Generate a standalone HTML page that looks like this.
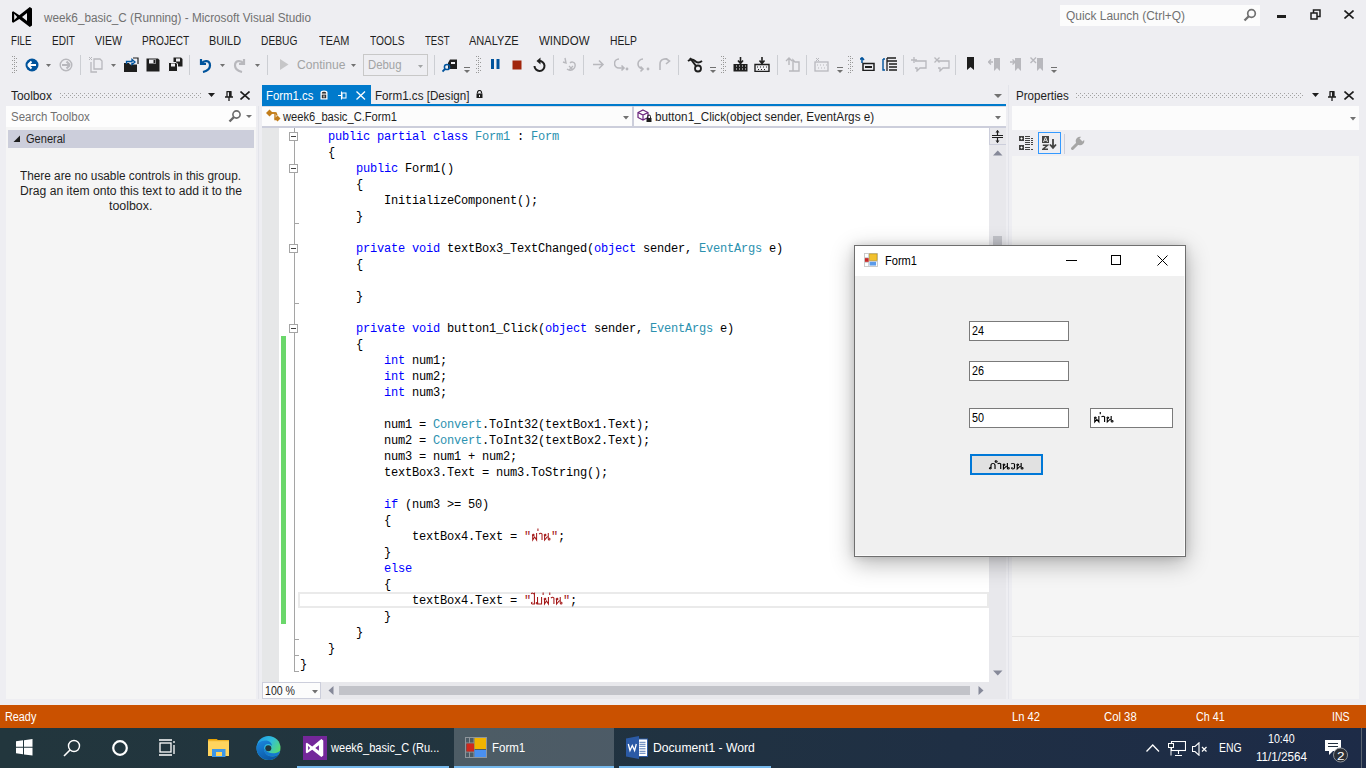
<!DOCTYPE html><html><head><meta charset="utf-8"><style>
html,body{margin:0;padding:0;width:1366px;height:768px;overflow:hidden;background:#eeeef2;position:relative}
body>div,body>svg{position:absolute}
div{position:absolute;box-sizing:border-box}
.t{line-height:0;white-space:pre}
.code{font-family:'Liberation Mono',monospace;font-size:12px;letter-spacing:-0.2px;color:#000}
</style></head><body>
<svg style="position:absolute;left:11px;top:7px;" width="22" height="21" viewBox="0 0 22 21"><path d="M18.8 0 L21 1.6 L21 18.4 L18.8 20 L8.3 12 L2.2 15.8 L1 15 L1 5 L2.2 4.2 L8.3 8.3 Z M3.2 6.8 L6.2 10 L3.2 13 Z M16 6 L16 14 L11 10 Z" fill="#000" fill-rule="evenodd"/></svg>
<div class="t" style="left:44.02px;top:17.84px;font-family:'Liberation Sans',sans-serif;font-size:12px;color:#717171;transform:scaleX(0.9771);transform-origin:0 0;">week6_basic_C (Running) - Microsoft Visual Studio</div>
<div style="left:1060px;top:5px;width:200px;height:21px;background:#fcfcfc;"></div>
<div class="t" style="left:1066.00px;top:15.84px;font-family:'Liberation Sans',sans-serif;font-size:12px;color:#717171;transform:scaleX(0.9941);transform-origin:0 0;">Quick Launch (Ctrl+Q)</div>
<svg style="position:absolute;left:1243px;top:8px;" width="14" height="14" viewBox="0 0 14 14"><circle cx="8.5" cy="5.5" r="3.8" stroke="#717171" stroke-width="1.7" fill="none"/><path d="M6 8 L1.5 12.5" stroke="#717171" stroke-width="2.3"/></svg>
<div style="left:1277px;top:15px;width:9px;height:3px;background:#1e1e1e;"></div>
<svg style="position:absolute;left:1310px;top:9px;" width="11" height="11" viewBox="0 0 11 11"><rect x="1" y="4" width="6" height="6" fill="none" stroke="#1e1e1e" stroke-width="1.5"/><path d="M3.5 4 V1 H10 V7.5 H7" fill="none" stroke="#1e1e1e" stroke-width="1.5"/></svg>
<svg style="position:absolute;left:1344px;top:10px;" width="10" height="9" viewBox="0 0 10 9"><path d="M0.5 0.5 L9.5 8.5 M9.5 0.5 L0.5 8.5" stroke="#1e1e1e" stroke-width="1.6"/></svg>
<div class="t" style="left:11.20px;top:40.84px;font-family:'Liberation Sans',sans-serif;font-size:12px;color:#1e1e1e;transform:scaleX(0.8049);transform-origin:0 0;">FILE</div>
<div class="t" style="left:52.30px;top:40.84px;font-family:'Liberation Sans',sans-serif;font-size:12px;color:#1e1e1e;transform:scaleX(0.8377);transform-origin:0 0;">EDIT</div>
<div class="t" style="left:95.00px;top:40.84px;font-family:'Liberation Sans',sans-serif;font-size:12px;color:#1e1e1e;transform:scaleX(0.8803);transform-origin:0 0;">VIEW</div>
<div class="t" style="left:142.40px;top:40.84px;font-family:'Liberation Sans',sans-serif;font-size:12px;color:#1e1e1e;transform:scaleX(0.8428);transform-origin:0 0;">PROJECT</div>
<div class="t" style="left:209.00px;top:40.84px;font-family:'Liberation Sans',sans-serif;font-size:12px;color:#1e1e1e;transform:scaleX(0.9055);transform-origin:0 0;">BUILD</div>
<div class="t" style="left:261.00px;top:40.84px;font-family:'Liberation Sans',sans-serif;font-size:12px;color:#1e1e1e;transform:scaleX(0.8530);transform-origin:0 0;">DEBUG</div>
<div class="t" style="left:318.60px;top:40.84px;font-family:'Liberation Sans',sans-serif;font-size:12px;color:#1e1e1e;transform:scaleX(0.9119);transform-origin:0 0;">TEAM</div>
<div class="t" style="left:369.50px;top:40.84px;font-family:'Liberation Sans',sans-serif;font-size:12px;color:#1e1e1e;transform:scaleX(0.8526);transform-origin:0 0;">TOOLS</div>
<div class="t" style="left:424.50px;top:40.84px;font-family:'Liberation Sans',sans-serif;font-size:12px;color:#1e1e1e;transform:scaleX(0.7988);transform-origin:0 0;">TEST</div>
<div class="t" style="left:468.50px;top:40.84px;font-family:'Liberation Sans',sans-serif;font-size:12px;color:#1e1e1e;transform:scaleX(0.9201);transform-origin:0 0;">ANALYZE</div>
<div class="t" style="left:538.50px;top:40.84px;font-family:'Liberation Sans',sans-serif;font-size:12px;color:#1e1e1e;transform:scaleX(0.9591);transform-origin:0 0;">WINDOW</div>
<div class="t" style="left:609.50px;top:40.84px;font-family:'Liberation Sans',sans-serif;font-size:12px;color:#1e1e1e;transform:scaleX(0.8614);transform-origin:0 0;">HELP</div>
<svg style="position:absolute;left:12px;top:56px;" width="5" height="17" viewBox="0 0 5 17"><rect x="0" y="0" width="1" height="1" fill="#999"/><rect x="2" y="0" width="1" height="1" fill="#999"/><rect x="2" y="2" width="1" height="1" fill="#999"/><rect x="4" y="2" width="1" height="1" fill="#999"/><rect x="0" y="4" width="1" height="1" fill="#999"/><rect x="2" y="4" width="1" height="1" fill="#999"/><rect x="2" y="6" width="1" height="1" fill="#999"/><rect x="4" y="6" width="1" height="1" fill="#999"/><rect x="0" y="8" width="1" height="1" fill="#999"/><rect x="2" y="8" width="1" height="1" fill="#999"/><rect x="2" y="10" width="1" height="1" fill="#999"/><rect x="4" y="10" width="1" height="1" fill="#999"/><rect x="0" y="12" width="1" height="1" fill="#999"/><rect x="2" y="12" width="1" height="1" fill="#999"/><rect x="2" y="14" width="1" height="1" fill="#999"/><rect x="4" y="14" width="1" height="1" fill="#999"/><rect x="0" y="16" width="1" height="1" fill="#999"/><rect x="2" y="16" width="1" height="1" fill="#999"/></svg>
<svg style="position:absolute;left:25px;top:58px;" width="14" height="14" viewBox="0 0 14 14"><circle cx="7" cy="7" r="6.5" fill="#00539c"/><path d="M3 7 L6.5 3.5 M3 7 L6.5 10.5 M3 7 H11" stroke="#fff" stroke-width="2" fill="none"/></svg>
<svg style="position:absolute;left:46px;top:64px;" width="6" height="3" viewBox="0 0 6 3"><path d="M0 0 H5 L2.5 3 Z" fill="#717171"/></svg>
<svg style="position:absolute;left:59px;top:58px;" width="14" height="14" viewBox="0 0 14 14"><circle cx="7" cy="7" r="5.8" fill="none" stroke="#b8b8bd" stroke-width="1.4"/><path d="M11 7 L7.5 3.5 M11 7 L7.5 10.5 M11 7 H3" stroke="#b8b8bd" stroke-width="2" fill="none"/></svg>
<div style="left:80px;top:55px;width:1px;height:20px;background:#ccced3;"></div>
<svg style="position:absolute;left:89px;top:57px;" width="15" height="16" viewBox="0 0 15 16"><path d="M2 5 V15 H8 M5 2 V12 H13 V4 L11 2 Z" fill="none" stroke="#b8b8bd" stroke-width="1.3"/><path d="M0 0 L3 3 M3 0 L0 3" stroke="#b8b8bd"/></svg>
<svg style="position:absolute;left:111px;top:64px;" width="6" height="3" viewBox="0 0 6 3"><path d="M0 0 H5 L2.5 3 Z" fill="#717171"/></svg>
<svg style="position:absolute;left:123px;top:57px;" width="16" height="16" viewBox="0 0 16 16"><path d="M1 6 H6 L7 7.5 H14 V15 H1 Z" fill="#1e1e1e"/><path d="M3.5 7 V4.5 H9 V2.5 L12 5 L9 7.5 V5.8" fill="none" stroke="#00539c" stroke-width="1.3"/><path d="M10 1 H15 V7" fill="none" stroke="#1e1e1e" stroke-width="1.2"/></svg>
<svg style="position:absolute;left:146px;top:58px;" width="14" height="14" viewBox="0 0 14 14"><path d="M0.5 0.5 H12 L13.5 2 V13.5 H0.5 Z" fill="#1e1e1e"/><rect x="3" y="1.5" width="7" height="4" fill="#eeeef2"/><rect x="7.5" y="2" width="2" height="3" fill="#1e1e1e"/></svg>
<svg style="position:absolute;left:168px;top:57px;" width="15" height="15" viewBox="0 0 15 15"><path d="M5.5 0.5 H13 L14.5 2 V9.5 H5.5 Z" fill="#1e1e1e"/><rect x="8" y="1.5" width="4" height="3" fill="#eeeef2"/><path d="M0.5 5.5 H8 L9.5 7 V14.5 H0.5 Z" fill="#1e1e1e" stroke="#eeeef2" stroke-width="1"/><rect x="3" y="6.5" width="4" height="3" fill="#eeeef2"/></svg>
<div style="left:189px;top:55px;width:1px;height:20px;background:#ccced3;"></div>
<svg style="position:absolute;left:197px;top:57px;" width="15" height="16" viewBox="0 0 15 16"><path d="M4 2 V7 H9" fill="none" stroke="#00539c" stroke-width="2.2"/><path d="M4.5 6.5 C7 3 13 3 13 8.5 C13 12 10 14 6 15" fill="none" stroke="#00539c" stroke-width="2.2"/></svg>
<svg style="position:absolute;left:220px;top:64px;" width="6" height="3" viewBox="0 0 6 3"><path d="M0 0 H5 L2.5 3 Z" fill="#717171"/></svg>
<svg style="position:absolute;left:233px;top:57px;" width="15" height="16" viewBox="0 0 15 16"><path d="M11 2 V7 H6" fill="none" stroke="#b8b8bd" stroke-width="2.2"/><path d="M10.5 6.5 C8 3 2 3 2 8.5 C2 12 5 14 9 15" fill="none" stroke="#b8b8bd" stroke-width="2.2"/></svg>
<svg style="position:absolute;left:255px;top:64px;" width="6" height="3" viewBox="0 0 6 3"><path d="M0 0 H5 L2.5 3 Z" fill="#717171"/></svg>
<div style="left:267px;top:55px;width:1px;height:20px;background:#ccced3;"></div>
<svg style="position:absolute;left:280px;top:59px;" width="9" height="12" viewBox="0 0 9 12"><path d="M0 0 L8.5 5.5 L0 11 Z" fill="#c6c6c8"/></svg>
<div class="t" style="left:296.50px;top:64.84px;font-family:'Liberation Sans',sans-serif;font-size:12px;color:#a2a4a5;transform:scaleX(1.0097);transform-origin:0 0;">Continue</div>
<svg style="position:absolute;left:351px;top:64px;" width="6" height="3" viewBox="0 0 6 3"><path d="M0 0 H5 L2.5 3 Z" fill="#717171"/></svg>
<div style="left:363px;top:54px;width:65px;height:22px;background:#eeeef2;border:1px solid #c8c8c8"></div>
<div class="t" style="left:368.00px;top:64.84px;font-family:'Liberation Sans',sans-serif;font-size:12px;color:#a2a4a5;transform:scaleX(0.9473);transform-origin:0 0;">Debug</div>
<svg style="position:absolute;left:418px;top:65px;" width="6" height="3" viewBox="0 0 6 3"><path d="M0 0 H5 L2.5 3 Z" fill="#a2a4a5"/></svg>
<div style="left:434px;top:55px;width:1px;height:20px;background:#ccced3;"></div>
<svg style="position:absolute;left:442px;top:57px;" width="17" height="16" viewBox="0 0 17 16"><path d="M6 6 L8 2.5 H15 V12 H6 Z" fill="#1e1e1e"/><rect x="9" y="5" width="4" height="2" fill="#eeeef2"/><circle cx="5" cy="10" r="2.6" fill="none" stroke="#00539c" stroke-width="1.5"/><path d="M3 12 L0.5 14.5" stroke="#00539c" stroke-width="1.8"/></svg>
<svg style="position:absolute;left:464px;top:67px;" width="7" height="7" viewBox="0 0 7 7"><rect x="0" y="0" width="6" height="1" fill="#717171"/><path d="M0 3 H6 L3 6 Z" fill="#717171"/></svg>
<svg style="position:absolute;left:476px;top:56px;" width="5" height="17" viewBox="0 0 5 17"><rect x="0" y="0" width="1" height="1" fill="#999"/><rect x="2" y="0" width="1" height="1" fill="#999"/><rect x="2" y="2" width="1" height="1" fill="#999"/><rect x="4" y="2" width="1" height="1" fill="#999"/><rect x="0" y="4" width="1" height="1" fill="#999"/><rect x="2" y="4" width="1" height="1" fill="#999"/><rect x="2" y="6" width="1" height="1" fill="#999"/><rect x="4" y="6" width="1" height="1" fill="#999"/><rect x="0" y="8" width="1" height="1" fill="#999"/><rect x="2" y="8" width="1" height="1" fill="#999"/><rect x="2" y="10" width="1" height="1" fill="#999"/><rect x="4" y="10" width="1" height="1" fill="#999"/><rect x="0" y="12" width="1" height="1" fill="#999"/><rect x="2" y="12" width="1" height="1" fill="#999"/><rect x="2" y="14" width="1" height="1" fill="#999"/><rect x="4" y="14" width="1" height="1" fill="#999"/><rect x="0" y="16" width="1" height="1" fill="#999"/><rect x="2" y="16" width="1" height="1" fill="#999"/></svg>
<svg style="position:absolute;left:491px;top:59px;" width="9" height="11" viewBox="0 0 9 11"><rect x="0" y="0" width="3" height="10" fill="#00539c"/><rect x="5.5" y="0" width="3" height="10" fill="#00539c"/></svg>
<svg style="position:absolute;left:512px;top:60px;" width="10" height="10" viewBox="0 0 10 10"><rect x="0.5" y="0.5" width="9" height="9" fill="#a1260d"/></svg>
<svg style="position:absolute;left:531px;top:57px;" width="16" height="16" viewBox="0 0 16 16"><g transform="translate(16,0) scale(-1,1)"><path d="M12.5 9 A5 5 0 1 1 8 4" fill="none" stroke="#1e1e1e" stroke-width="2"/><path d="M6.5 0.5 L10.5 4 L6.5 7.5 Z" fill="#1e1e1e"/></g></svg>
<div style="left:553px;top:55px;width:1px;height:20px;background:#ccced3;"></div>
<svg style="position:absolute;left:562px;top:57px;" width="16" height="16" viewBox="0 0 16 16"><path d="M3 1 L4 6 L1 5 M5 12 A5 5 0 0 0 13 7 A3 3 0 0 0 8 6" fill="none" stroke="#b8b8bd" stroke-width="1.4"/><path d="M7 9 L11 13 M11 9 L7 13" stroke="#b8b8bd" stroke-width="1.2"/></svg>
<div style="left:583px;top:55px;width:1px;height:20px;background:#ccced3;"></div>
<svg style="position:absolute;left:592px;top:59px;" width="13" height="11" viewBox="0 0 13 11"><path d="M1 5.5 H11 M7 1.5 L11 5.5 L7 9.5" fill="none" stroke="#b8b8bd" stroke-width="1.5"/></svg>
<svg style="position:absolute;left:614px;top:58px;" width="15" height="14" viewBox="0 0 15 14"><path d="M5 1 A4.5 4.5 0 0 0 5 10 H10 M7.5 7.5 L10 10 L7.5 12.5" fill="none" stroke="#b8b8bd" stroke-width="1.6"/><circle cx="13" cy="11" r="1.4" fill="#b8b8bd"/></svg>
<svg style="position:absolute;left:637px;top:58px;" width="13" height="15" viewBox="0 0 13 15"><path d="M6 1 A4.5 4.5 0 0 0 6 11 M3.5 8.5 L6 11 L3.5 13.5" fill="none" stroke="#b8b8bd" stroke-width="1.6"/><circle cx="11" cy="11" r="1.4" fill="#b8b8bd"/></svg>
<svg style="position:absolute;left:657px;top:58px;" width="14" height="14" viewBox="0 0 14 14"><path d="M12 3 A5 5 0 0 0 3 6 V12 M9 0.5 L12.5 3 L9 6" fill="none" stroke="#b8b8bd" stroke-width="1.6"/></svg>
<div style="left:678px;top:55px;width:1px;height:20px;background:#ccced3;"></div>
<svg style="position:absolute;left:687px;top:57px;" width="16" height="16" viewBox="0 0 16 16"><path d="M1 4 Q5 1 8 4 T15 4" fill="none" stroke="#1e1e1e" stroke-width="2"/><path d="M3 1 L9 9" stroke="#1e1e1e" stroke-width="2"/><circle cx="11" cy="11.5" r="3" fill="none" stroke="#1e1e1e" stroke-width="1.8"/></svg>
<svg style="position:absolute;left:710px;top:67px;" width="7" height="7" viewBox="0 0 7 7"><rect x="0" y="0" width="6" height="1" fill="#717171"/><path d="M0 3 H6 L3 6 Z" fill="#717171"/></svg>
<svg style="position:absolute;left:721px;top:56px;" width="5" height="17" viewBox="0 0 5 17"><rect x="0" y="0" width="1" height="1" fill="#999"/><rect x="2" y="0" width="1" height="1" fill="#999"/><rect x="2" y="2" width="1" height="1" fill="#999"/><rect x="4" y="2" width="1" height="1" fill="#999"/><rect x="0" y="4" width="1" height="1" fill="#999"/><rect x="2" y="4" width="1" height="1" fill="#999"/><rect x="2" y="6" width="1" height="1" fill="#999"/><rect x="4" y="6" width="1" height="1" fill="#999"/><rect x="0" y="8" width="1" height="1" fill="#999"/><rect x="2" y="8" width="1" height="1" fill="#999"/><rect x="2" y="10" width="1" height="1" fill="#999"/><rect x="4" y="10" width="1" height="1" fill="#999"/><rect x="0" y="12" width="1" height="1" fill="#999"/><rect x="2" y="12" width="1" height="1" fill="#999"/><rect x="2" y="14" width="1" height="1" fill="#999"/><rect x="4" y="14" width="1" height="1" fill="#999"/><rect x="0" y="16" width="1" height="1" fill="#999"/><rect x="2" y="16" width="1" height="1" fill="#999"/></svg>
<svg style="position:absolute;left:733px;top:57px;" width="15" height="15" viewBox="0 0 15 15"><path d="M7.5 0 V6 M5 3.5 L7.5 6.5 L10 3.5" fill="none" stroke="#1e1e1e" stroke-width="1.6"/><path d="M0.5 7 H14.5 V14.5 H0.5 Z" fill="#1e1e1e"/><path d="M3 9 H4 M6 9 H7 M9 9 H10 M12 9 H13 M3 12 H4 M6 12 H7 M9 12 H10 M12 12 H13" stroke="#eeeef2"/></svg>
<svg style="position:absolute;left:754px;top:57px;" width="16" height="15" viewBox="0 0 16 15"><path d="M8 0 V6 M5.5 3.5 L8 6.5 L10.5 3.5" fill="none" stroke="#1e1e1e" stroke-width="1.6"/><path d="M1 7.5 H15 V14.5 H1 Z" fill="none" stroke="#1e1e1e" stroke-width="1.4"/><path d="M3 10 H4 M6 10 H7 M9 10 H10 M12 10 H13 M4 12.5 H5 M7 12.5 H8 M10 12.5 H11" stroke="#1e1e1e"/></svg>
<div style="left:777px;top:55px;width:1px;height:20px;background:#ccced3;"></div>
<svg style="position:absolute;left:785px;top:57px;" width="15" height="15" viewBox="0 0 15 15"><path d="M4 14 H14 V5 H10 L8 3 V14 M1 4 L4 1 L7 4 M4 1 V8" fill="none" stroke="#b8b8bd" stroke-width="1.4"/></svg>
<div style="left:806px;top:55px;width:1px;height:20px;background:#ccced3;"></div>
<svg style="position:absolute;left:814px;top:57px;" width="15" height="15" viewBox="0 0 15 15"><rect x="1" y="5" width="13" height="9" fill="none" stroke="#b8b8bd" stroke-width="1.3"/><path d="M3 8 H4 M6 8 H7 M9 8 H10 M12 8 H13 M4 11 H5 M7 11 H8 M10 11 H11 M2 1 L5 4 M5 1 L2 4" stroke="#b8b8bd"/></svg>
<svg style="position:absolute;left:837px;top:67px;" width="7" height="7" viewBox="0 0 7 7"><rect x="0" y="0" width="6" height="1" fill="#717171"/><path d="M0 3 H6 L3 6 Z" fill="#717171"/></svg>
<svg style="position:absolute;left:848px;top:56px;" width="5" height="17" viewBox="0 0 5 17"><rect x="0" y="0" width="1" height="1" fill="#999"/><rect x="2" y="0" width="1" height="1" fill="#999"/><rect x="2" y="2" width="1" height="1" fill="#999"/><rect x="4" y="2" width="1" height="1" fill="#999"/><rect x="0" y="4" width="1" height="1" fill="#999"/><rect x="2" y="4" width="1" height="1" fill="#999"/><rect x="2" y="6" width="1" height="1" fill="#999"/><rect x="4" y="6" width="1" height="1" fill="#999"/><rect x="0" y="8" width="1" height="1" fill="#999"/><rect x="2" y="8" width="1" height="1" fill="#999"/><rect x="2" y="10" width="1" height="1" fill="#999"/><rect x="4" y="10" width="1" height="1" fill="#999"/><rect x="0" y="12" width="1" height="1" fill="#999"/><rect x="2" y="12" width="1" height="1" fill="#999"/><rect x="2" y="14" width="1" height="1" fill="#999"/><rect x="4" y="14" width="1" height="1" fill="#999"/><rect x="0" y="16" width="1" height="1" fill="#999"/><rect x="2" y="16" width="1" height="1" fill="#999"/></svg>
<svg style="position:absolute;left:860px;top:57px;" width="15" height="14" viewBox="0 0 15 14"><path d="M2 0.5 L4 3 M2 0.5 V6 M0 2.5 L2 0.5" fill="none" stroke="#00539c" stroke-width="1.5"/><path d="M3 6.5 H14 V13.5 H3 Z" fill="none" stroke="#1e1e1e" stroke-width="1.5"/><rect x="5" y="9" width="7" height="2" fill="#1e1e1e"/></svg>
<svg style="position:absolute;left:882px;top:57px;" width="16" height="15" viewBox="0 0 16 15"><path d="M1 2 V13 H3 M1 2 H3" fill="none" stroke="#00539c" stroke-width="1.4"/><path d="M5 1 H14 M5 4 H15 M7 7 H15 M7 10 H15 M7 13 H15 M5 1 V14" fill="none" stroke="#1e1e1e" stroke-width="1.3"/></svg>
<div style="left:903px;top:55px;width:1px;height:20px;background:#ccced3;"></div>
<svg style="position:absolute;left:911px;top:57px;" width="16" height="15" viewBox="0 0 16 15"><path d="M4 4 H15 V11 H9 L6 14 V11 H4" fill="none" stroke="#b8b8bd" stroke-width="1.3"/><path d="M3 0 V6 M0 3 H6" stroke="#b8b8bd" stroke-width="1.3"/></svg>
<svg style="position:absolute;left:934px;top:57px;" width="16" height="15" viewBox="0 0 16 15"><path d="M4 4 H15 V11 H9 L6 14 V11 H4" fill="none" stroke="#b8b8bd" stroke-width="1.3"/><path d="M0.5 0.5 L5.5 5.5 M5.5 0.5 L0.5 5.5" stroke="#b8b8bd" stroke-width="1.3"/></svg>
<div style="left:955px;top:55px;width:1px;height:20px;background:#ccced3;"></div>
<svg style="position:absolute;left:967px;top:57px;" width="8" height="14" viewBox="0 0 8 14"><path d="M0 0 H7 V13 L3.5 10 L0 13 Z" fill="#1e1e1e"/></svg>
<svg style="position:absolute;left:988px;top:57px;" width="13" height="15" viewBox="0 0 13 15"><path d="M6 1 H12 V14 L9 11 L6 14 Z" fill="#b8b8bd"/><path d="M5 5 H0.5 M3 2.5 L0.5 5 L3 7.5" fill="none" stroke="#b8b8bd" stroke-width="1.4"/></svg>
<svg style="position:absolute;left:1010px;top:57px;" width="12" height="15" viewBox="0 0 12 15"><path d="M5 1 H11 V14 L8 11 L5 14 Z" fill="#b8b8bd"/><path d="M0 5 H5 M2.5 2.5 L5 5 L2.5 7.5" fill="none" stroke="#b8b8bd" stroke-width="1.4"/></svg>
<svg style="position:absolute;left:1030px;top:57px;" width="14" height="15" viewBox="0 0 14 15"><path d="M7 1 H13 V14 L10 11 L7 14 Z" fill="#b8b8bd"/><path d="M0.5 0.5 L6 6 M6 0.5 L0.5 6" stroke="#b8b8bd" stroke-width="1.4"/></svg>
<svg style="position:absolute;left:1051px;top:67px;" width="7" height="7" viewBox="0 0 7 7"><rect x="0" y="0" width="6" height="1" fill="#717171"/><path d="M0 3 H6 L3 6 Z" fill="#717171"/></svg>
<div class="t" style="left:10.50px;top:95.84px;font-family:'Liberation Sans',sans-serif;font-size:12px;color:#1e1e1e;transform:scaleX(0.9888);transform-origin:0 0;">Toolbox</div>
<div style="left:60px;top:93px;width:142px;height:5px;background-image:radial-gradient(circle at 0.5px 0.5px,#999 0.6px,transparent 0.8px);background-size:4px 4px;opacity:.9"></div>
<div style="left:62px;top:95px;width:140px;height:3px;background-image:radial-gradient(circle at 0.5px 0.5px,#999 0.6px,transparent 0.8px);background-size:4px 4px;opacity:.9"></div>
<svg style="position:absolute;left:208px;top:93px;" width="8" height="5" viewBox="0 0 8 5"><path d="M0 0 H7 L3.5 4 Z" fill="#1e1e1e"/></svg>
<svg style="position:absolute;left:225px;top:91px;" width="8" height="10" viewBox="0 0 8 10"><path d="M1.5 0.5 H6.5 M2 0.5 V6 H6 V0.5 M0 6 H8 M4 6 V10" fill="none" stroke="#1e1e1e" stroke-width="1.3"/><rect x="4" y="1" width="2" height="5" fill="#1e1e1e"/></svg>
<svg style="position:absolute;left:240px;top:91px;" width="10" height="9" viewBox="0 0 10 9"><path d="M0.5 0.5 L9.5 8.5 M9.5 0.5 L0.5 8.5" stroke="#1e1e1e" stroke-width="1.6"/></svg>
<div style="left:6px;top:106px;width:250px;height:21px;background:#fdfdfd;"></div>
<div class="t" style="left:11.20px;top:116.84px;font-family:'Liberation Sans',sans-serif;font-size:12px;color:#717171;transform:scaleX(0.9552);transform-origin:0 0;">Search Toolbox</div>
<svg style="position:absolute;left:228px;top:109px;" width="14" height="14" viewBox="0 0 14 14"><circle cx="8.5" cy="5.5" r="3.6" stroke="#6a6a6a" stroke-width="1.6" fill="none"/><path d="M6 8 L1.5 12.5" stroke="#6a6a6a" stroke-width="2.4"/></svg>
<svg style="position:absolute;left:246px;top:115px;" width="6" height="3" viewBox="0 0 6 3"><path d="M0 0 H6 L3 3 Z" fill="#717171"/></svg>
<div style="left:6px;top:127px;width:250px;height:572px;background:#f5f5f5;"></div>
<div style="left:8px;top:130px;width:246px;height:18px;background:#cccedb;"></div>
<svg style="position:absolute;left:13px;top:135px;" width="8" height="8" viewBox="0 0 8 8"><path d="M7 0.5 V7 H0.5 Z" fill="#1e1e1e"/></svg>
<div class="t" style="left:25.50px;top:138.84px;font-family:'Liberation Sans',sans-serif;font-size:12px;color:#1e1e1e;transform:scaleX(0.9205);transform-origin:0 0;">General</div>
<div class="t" style="left:20.20px;top:175.84px;font-family:'Liberation Sans',sans-serif;font-size:12px;color:#1e1e1e;transform:scaleX(0.9831);transform-origin:0 0;">There are no usable controls in this group.</div>
<div class="t" style="left:20.20px;top:190.84px;font-family:'Liberation Sans',sans-serif;font-size:12px;color:#1e1e1e;transform:scaleX(1.0120);transform-origin:0 0;">Drag an item onto this text to add it to the</div>
<div class="t" style="left:109.20px;top:205.84px;font-family:'Liberation Sans',sans-serif;font-size:12px;color:#1e1e1e;transform:scaleX(1.0327);transform-origin:0 0;">toolbox.</div>
<div style="left:258px;top:106px;width:1px;height:593px;background:#e3e4ea;"></div>
<div style="left:262px;top:85px;width:109px;height:21px;background:#007acc;"></div>
<div class="t" style="left:266.40px;top:95.84px;font-family:'Liberation Sans',sans-serif;font-size:12px;color:#ffffff;transform:scaleX(0.9499);transform-origin:0 0;">Form1.cs</div>
<svg style="position:absolute;left:320px;top:90px;" width="8" height="10" viewBox="0 0 8 10"><path d="M0.5 2.5 Q0.5 0.5 4 0.5 Q7.5 0.5 7.5 2.5 V9.5 H0.5 Z" fill="#fff"/><path d="M1.8 3 Q1.8 1.8 4 1.8 Q6.2 1.8 6.2 3 V8.3 H1.8 Z" fill="#333"/><rect x="1" y="3.6" width="6" height="1" fill="#fff"/><rect x="3.5" y="5.5" width="1" height="2" fill="#fff"/></svg>
<svg style="position:absolute;left:338px;top:91px;" width="9" height="9" viewBox="0 0 9 9"><path d="M0 4.5 H3.5 M3.5 0.5 V8.5" fill="none" stroke="#fff" stroke-width="1.1"/><rect x="4" y="2" width="4" height="5" fill="none" stroke="#fff" stroke-width="1"/></svg>
<svg style="position:absolute;left:356px;top:91px;" width="10" height="9" viewBox="0 0 10 9"><path d="M0.5 0.5 L9 8.5 M9 0.5 L0.5 8.5" stroke="#fff" stroke-width="1.3"/></svg>
<div class="t" style="left:375.40px;top:95.84px;font-family:'Liberation Sans',sans-serif;font-size:12px;color:#1e1e1e;transform:scaleX(0.9696);transform-origin:0 0;">Form1.cs [Design]</div>
<svg style="position:absolute;left:476px;top:90px;" width="7" height="8" viewBox="0 0 7 8"><path d="M1.5 3.5 V2.5 A2 2 0 0 1 5.5 2.5 V3.5" fill="none" stroke="#1e1e1e" stroke-width="1.2"/><rect x="0.5" y="3.5" width="6" height="4.5" fill="#1e1e1e"/><rect x="3" y="5" width="1" height="2" fill="#eeeef2"/></svg>
<svg style="position:absolute;left:994px;top:94px;" width="9" height="5" viewBox="0 0 9 5"><path d="M0 0 H8 L4 4 Z" fill="#717171"/></svg>
<div style="left:262px;top:104px;width:744px;height:2px;background:#007acc;"></div>
<div style="left:262px;top:106px;width:744px;height:22px;background:#fcfcfc;border-bottom:2px solid #cccedb"></div>
<div style="left:262px;top:106px;width:744px;height:1px;background:#dcdde5;"></div>
<div style="left:632px;top:106px;width:2px;height:20px;background:#cccedb;"></div>
<svg style="position:absolute;left:266px;top:109px;" width="15" height="14" viewBox="0 0 15 14"><path d="M3.5 0.5 L7 4 L3.5 7.5 L0 4 Z" fill="#c27d1a"/><path d="M6 4 H9 V10.5 H10" fill="none" stroke="#c27d1a" stroke-width="1.4"/><path d="M11.5 6.5 L14.5 9.5 L11.5 12.5 L8.5 9.5 Z" fill="#c27d1a"/><path d="M5 4 H10 L11 6.5" fill="none" stroke="#c27d1a" stroke-width="1.4"/></svg>
<div class="t" style="left:283.02px;top:116.84px;font-family:'Liberation Sans',sans-serif;font-size:12px;color:#1e1e1e;transform:scaleX(0.9287);transform-origin:0 0;">week6_basic_C.Form1</div>
<svg style="position:absolute;left:623px;top:116px;" width="7" height="4" viewBox="0 0 7 4"><path d="M0 0 H6 L3 3.5 Z" fill="#717171"/></svg>
<svg style="position:absolute;left:637px;top:109px;" width="16" height="14" viewBox="0 0 16 14"><path d="M6 1 L11 3.5 V8.5 L6 11 L1 8.5 V3.5 Z M1 3.5 L6 6 L11 3.5 M6 6 V11" fill="none" stroke="#68217a" stroke-width="1.2"/><rect x="9.5" y="9" width="5" height="4" fill="#1e1e1e"/><path d="M10.5 9 V7.5 A1.5 1.5 0 0 1 13.5 7.5 V9" fill="none" stroke="#1e1e1e"/></svg>
<div class="t" style="left:655.30px;top:116.84px;font-family:'Liberation Sans',sans-serif;font-size:12px;color:#1e1e1e;transform:scaleX(0.9780);transform-origin:0 0;">button1_Click(object sender, EventArgs e)</div>
<svg style="position:absolute;left:995px;top:116px;" width="7" height="4" viewBox="0 0 7 4"><path d="M0 0 H6 L3 3.5 Z" fill="#717171"/></svg>
<div style="left:262px;top:128px;width:727px;height:554px;background:#ffffff;"></div>
<div style="left:262px;top:128px;width:17px;height:554px;background:#e6e7e8;"></div>
<div style="left:298px;top:592px;width:691px;height:16px;background:transparent;border:2px solid #eaeaea"></div>
<div class="t code" style="left:328px;top:136.80px"><span style="color:#0000ff">public partial class </span><span style="color:#2b91af">Form1</span><span style="color:#000000"> : </span><span style="color:#2b91af">Form</span></div>
<div class="t code" style="left:328px;top:152.80px"><span style="color:#000000">{</span></div>
<div class="t code" style="left:356px;top:168.80px"><span style="color:#0000ff">public </span><span style="color:#000000">Form1()</span></div>
<div class="t code" style="left:356px;top:184.80px"><span style="color:#000000">{</span></div>
<div class="t code" style="left:384px;top:200.80px"><span style="color:#000000">InitializeComponent();</span></div>
<div class="t code" style="left:356px;top:216.80px"><span style="color:#000000">}</span></div>
<div class="t code" style="left:356px;top:248.80px"><span style="color:#0000ff">private void </span><span style="color:#000000">textBox3_TextChanged(</span><span style="color:#0000ff">object</span><span style="color:#000000"> sender, </span><span style="color:#2b91af">EventArgs</span><span style="color:#000000"> e)</span></div>
<div class="t code" style="left:356px;top:264.80px"><span style="color:#000000">{</span></div>
<div class="t code" style="left:356px;top:296.80px"><span style="color:#000000">}</span></div>
<div class="t code" style="left:356px;top:328.80px"><span style="color:#0000ff">private void </span><span style="color:#000000">button1_Click(</span><span style="color:#0000ff">object</span><span style="color:#000000"> sender, </span><span style="color:#2b91af">EventArgs</span><span style="color:#000000"> e)</span></div>
<div class="t code" style="left:356px;top:344.80px"><span style="color:#000000">{</span></div>
<div class="t code" style="left:384px;top:360.80px"><span style="color:#0000ff">int</span><span style="color:#000000"> num1;</span></div>
<div class="t code" style="left:384px;top:376.80px"><span style="color:#0000ff">int</span><span style="color:#000000"> num2;</span></div>
<div class="t code" style="left:384px;top:392.80px"><span style="color:#0000ff">int</span><span style="color:#000000"> num3;</span></div>
<div class="t code" style="left:384px;top:424.80px"><span style="color:#000000">num1 = </span><span style="color:#2b91af">Convert</span><span style="color:#000000">.ToInt32(textBox1.Text);</span></div>
<div class="t code" style="left:384px;top:440.80px"><span style="color:#000000">num2 = </span><span style="color:#2b91af">Convert</span><span style="color:#000000">.ToInt32(textBox2.Text);</span></div>
<div class="t code" style="left:384px;top:456.80px"><span style="color:#000000">num3 = num1 + num2;</span></div>
<div class="t code" style="left:384px;top:472.80px"><span style="color:#000000">textBox3.Text = num3.ToString();</span></div>
<div class="t code" style="left:384px;top:504.80px"><span style="color:#0000ff">if</span><span style="color:#000000"> (num3 &gt;= 50)</span></div>
<div class="t code" style="left:384px;top:520.80px"><span style="color:#000000">{</span></div>
<div class="t code" style="left:412px;top:536.80px"><span style="color:#000000">textBox4.Text = </span><span style="color:#a31515">&quot;</span><span style="display:inline-block;width:20px;height:1px;position:relative;vertical-align:baseline"></span><span style="color:#a31515">&quot;</span><span style="color:#000000">;</span></div>
<div class="t code" style="left:384px;top:552.80px"><span style="color:#000000">}</span></div>
<div class="t code" style="left:384px;top:568.80px"><span style="color:#0000ff">else</span></div>
<div class="t code" style="left:384px;top:584.80px"><span style="color:#000000">{</span></div>
<div class="t code" style="left:412px;top:600.80px"><span style="color:#000000">textBox4.Text = </span><span style="color:#a31515">&quot;</span><span style="display:inline-block;width:32px;height:1px;position:relative;vertical-align:baseline"></span><span style="color:#a31515">&quot;</span><span style="color:#000000">;</span></div>
<div class="t code" style="left:384px;top:616.80px"><span style="color:#000000">}</span></div>
<div class="t code" style="left:356px;top:632.80px"><span style="color:#000000">}</span></div>
<div class="t code" style="left:328px;top:648.80px"><span style="color:#000000">}</span></div>
<div class="t code" style="left:300px;top:664.80px"><span style="color:#000000">}</span></div>
<svg style="position:absolute;left:531.00px;top:527.00px;overflow:visible" width="23.2" height="15.0"><g transform="translate(1,6.00) scale(1.023,1.000)" fill="none" stroke="#a31515" stroke-width="1.00"><path transform="translate(0.00,0)" d="M0.7 1.5 V7 L2.6 4 L4.5 7 V0 M0.7 1.5 m-0.1 0 a0.8 0.8 0 1 0 0.1 -0.1"/><path transform="translate(5.80,0)" d="M0 -4.6 V-2"/><path transform="translate(6.40,0)" d="M0.5 1.2 Q2 -0.4 3.4 1 V7"/><path transform="translate(11.60,0)" d="M0.7 1.5 V7 L3.6 3.5 M4.3 0 V6 Q4.3 7 5.2 7 Q6 7 6 6 Q6 5 5 5.2 M0.7 1.5 m-0.1 0 a0.8 0.8 0 1 0 0.1 -0.1"/></g></svg>
<svg style="position:absolute;left:530.00px;top:591.00px;overflow:visible" width="36.2" height="15.0"><g transform="translate(1,6.00) scale(1.037,1.000)" fill="none" stroke="#a31515" stroke-width="1.00"><path transform="translate(0.00,0)" d="M0.3 -3 Q1 -4.6 2 -3.6 Q3 -2.6 3.6 -4.4 M3.3 -3.4 V7 H1.3 Q0.4 7 0.5 6 Q0.6 5.2 1.4 5.4"/><path transform="translate(5.60,0)" d="M0.7 0 V7 H4.6 V0 M0.7 5.5 a0.8 0.8 0 1 0 0.1 0.1"/><path transform="translate(11.70,0)" d="M0 -4.6 V-2"/><path transform="translate(12.30,0)" d="M0.7 1.5 V7 L2.6 4 L4.5 7 V0 M0.7 1.5 m-0.1 0 a0.8 0.8 0 1 0 0.1 -0.1"/><path transform="translate(18.10,0)" d="M0 -4.6 V-2"/><path transform="translate(18.70,0)" d="M0.5 1.2 Q2 -0.4 3.4 1 V7"/><path transform="translate(23.90,0)" d="M0.7 1.5 V7 L3.6 3.5 M4.3 0 V6 Q4.3 7 5.2 7 Q6 7 6 6 Q6 5 5 5.2 M0.7 1.5 m-0.1 0 a0.8 0.8 0 1 0 0.1 -0.1"/></g></svg>
<div style="left:294px;top:128px;width:1px;height:544px;background:#a5a5a5;"></div>
<div style="left:294px;top:223px;width:5px;height:1px;background:#a5a5a5;"></div>
<div style="left:294px;top:303px;width:5px;height:1px;background:#a5a5a5;"></div>
<div style="left:294px;top:639px;width:5px;height:1px;background:#a5a5a5;"></div>
<div style="left:294px;top:655px;width:5px;height:1px;background:#a5a5a5;"></div>
<div style="left:294px;top:671px;width:5px;height:1px;background:#a5a5a5;"></div>
<div style="left:289px;top:132px;width:9px;height:9px;background:#ffffff;border:1px solid #a5a5a5"></div>
<div style="left:291px;top:136px;width:5px;height:1px;background:#424242;"></div>
<div style="left:289px;top:164px;width:9px;height:9px;background:#ffffff;border:1px solid #a5a5a5"></div>
<div style="left:291px;top:168px;width:5px;height:1px;background:#424242;"></div>
<div style="left:289px;top:244px;width:9px;height:9px;background:#ffffff;border:1px solid #a5a5a5"></div>
<div style="left:291px;top:248px;width:5px;height:1px;background:#424242;"></div>
<div style="left:289px;top:324px;width:9px;height:9px;background:#ffffff;border:1px solid #a5a5a5"></div>
<div style="left:291px;top:328px;width:5px;height:1px;background:#424242;"></div>
<div style="left:281px;top:336px;width:5px;height:288px;background:#6bd76b;"></div>
<div style="left:989px;top:128px;width:17px;height:554px;background:#e8e8ec;"></div>
<div style="left:989px;top:128px;width:17px;height:17px;background:#e8e8ec;border-left:1px solid #cccedb;border-bottom:1px solid #cccedb"></div>
<svg style="position:absolute;left:991px;top:129px;" width="13" height="15" viewBox="0 0 13 15"><path d="M1 6.5 H12 M1 8.5 H12" stroke="#1e1e1e" stroke-width="1"/><path d="M6.5 1.5 V6 M6.5 9 V13.5" stroke="#1e1e1e" stroke-width="1.2"/><path d="M4.5 3.5 L6.5 1 L8.5 3.5 Z M4.5 11.5 L6.5 14 L8.5 11.5 Z" fill="#1e1e1e"/></svg>
<svg style="position:absolute;left:993px;top:150px;" width="10" height="6" viewBox="0 0 10 6"><path d="M0 5.5 H9.5 L4.75 0.5 Z" fill="#868999"/></svg>
<div style="left:993px;top:236px;width:9px;height:314px;background:#c2c3c9;"></div>
<svg style="position:absolute;left:993px;top:670px;" width="10" height="6" viewBox="0 0 10 6"><path d="M0 0.5 H9.5 L4.75 5.5 Z" fill="#868999"/></svg>
<div style="left:262px;top:682px;width:744px;height:17px;background:#e8e8ec;"></div>
<div style="left:262px;top:682px;width:59px;height:17px;background:#fcfcfc;border:1px solid #cccedb"></div>
<div class="t" style="left:265.00px;top:690.84px;font-family:'Liberation Sans',sans-serif;font-size:12px;color:#1e1e1e;transform:scaleX(0.8818);transform-origin:0 0;">100 %</div>
<svg style="position:absolute;left:312px;top:690px;" width="7" height="4" viewBox="0 0 7 4"><path d="M0 0 H6 L3 3.5 Z" fill="#717171"/></svg>
<svg style="position:absolute;left:328px;top:686px;" width="6" height="9" viewBox="0 0 6 9"><path d="M5.5 0 V9 L0.5 4.5 Z" fill="#868999"/></svg>
<div style="left:339px;top:686px;width:631px;height:9px;background:#c2c3c9;"></div>
<svg style="position:absolute;left:978px;top:686px;" width="6" height="9" viewBox="0 0 6 9"><path d="M0.5 0 V9 L5.5 4.5 Z" fill="#868999"/></svg>
<div style="left:1008px;top:85px;width:1px;height:614px;background:#e3e4ea;"></div>
<div class="t" style="left:1016.20px;top:95.84px;font-family:'Liberation Sans',sans-serif;font-size:12px;color:#1e1e1e;transform:scaleX(0.9653);transform-origin:0 0;">Properties</div>
<div style="left:1076px;top:93px;width:228px;height:5px;background-image:radial-gradient(circle at 0.5px 0.5px,#999 0.6px,transparent 0.8px);background-size:4px 4px;opacity:.9"></div>
<div style="left:1078px;top:95px;width:226px;height:3px;background-image:radial-gradient(circle at 0.5px 0.5px,#999 0.6px,transparent 0.8px);background-size:4px 4px;opacity:.9"></div>
<svg style="position:absolute;left:1312px;top:93px;" width="8" height="5" viewBox="0 0 8 5"><path d="M0 0 H7 L3.5 4 Z" fill="#1e1e1e"/></svg>
<svg style="position:absolute;left:1328px;top:91px;" width="8" height="10" viewBox="0 0 8 10"><path d="M1.5 0.5 H6.5 M2 0.5 V6 H6 V0.5 M0 6 H8 M4 6 V10" fill="none" stroke="#1e1e1e" stroke-width="1.3"/><rect x="4" y="1" width="2" height="5" fill="#1e1e1e"/></svg>
<svg style="position:absolute;left:1344px;top:91px;" width="10" height="9" viewBox="0 0 10 9"><path d="M0.5 0.5 L9.5 8.5 M9.5 0.5 L0.5 8.5" stroke="#1e1e1e" stroke-width="1.6"/></svg>
<div style="left:1012px;top:106px;width:347px;height:24px;background:#fcfcfc;"></div>
<svg style="position:absolute;left:1350px;top:117px;" width="7" height="4" viewBox="0 0 7 4"><path d="M0 0 H6 L3 3.5 Z" fill="#717171"/></svg>
<div style="left:1012px;top:131px;width:347px;height:26px;background:#eeeef2;"></div>
<svg style="position:absolute;left:1018px;top:135px;" width="16" height="16" viewBox="0 0 16 16"><rect x="1" y="1" width="5" height="5" fill="#424242"/><rect x="1" y="10" width="5" height="5" fill="#424242"/><path d="M2.5 3.5 H4.5 M3.5 2.5 V4.5 M2.5 12.5 H4.5 M3.5 11.5 V13.5" stroke="#fff" stroke-width="1"/><path d="M7 1.5 H12 M7 3.5 H12 M7 5.5 H12 M7 7.5 H12 M7 9.5 H12 M7 12.5 H12 M7 14.5 H12 M13 3.5 H15 M13 5.5 H15 M13 7.5 H15 M13 9.5 H15 M13 14.5 H15" stroke="#424242" stroke-width="1"/></svg>
<div style="left:1038px;top:132px;width:23px;height:22px;background:#eeeef2;border:1px solid #3399ff"></div>
<svg style="position:absolute;left:1042px;top:136px;" width="15" height="14" viewBox="0 0 15 14"><rect x="0" y="0" width="7" height="7" fill="#424242"/><path d="M1.5 6 L3.5 1 L5.5 6 M2.3 4.3 H4.7" fill="none" stroke="#ddd" stroke-width="1"/><path d="M0.8 9.3 H5.5 L0.8 13.2 H6" fill="none" stroke="#424242" stroke-width="1.5"/><path d="M11 3 V11.5 M8 8.5 L11 11.8 L14 8.5" fill="none" stroke="#424242" stroke-width="1.8"/></svg>
<div style="left:1064px;top:134px;width:1px;height:20px;background:#cccedb;"></div>
<svg style="position:absolute;left:1071px;top:136px;" width="14" height="14" viewBox="0 0 14 14"><path d="M1.5 12.5 L7 7" stroke="#a6a6a6" stroke-width="3" stroke-linecap="round"/><circle cx="9" cy="5" r="4.3" fill="#a6a6a6"/><path d="M8.5 2.5 L11 0 L14 3 L11.5 5.5 Z" fill="#eeeef2"/></svg>
<div style="left:1012px;top:156px;width:347px;height:480px;background:#f5f5f5;"></div>
<div style="left:1012px;top:636px;width:347px;height:1px;background:#e6e6e6;"></div>
<div style="left:1012px;top:637px;width:347px;height:62px;background:#f5f5f5;"></div>
<div style="left:0px;top:705px;width:1366px;height:23px;background:#ca5100;"></div>
<div class="t" style="left:4.50px;top:716.84px;font-family:'Liberation Sans',sans-serif;font-size:12px;color:#ffffff;transform:scaleX(0.9022);transform-origin:0 0;">Ready</div>
<div class="t" style="left:1012.00px;top:716.84px;font-family:'Liberation Sans',sans-serif;font-size:12px;color:#ffffff;transform:scaleX(0.9326);transform-origin:0 0;">Ln 42</div>
<div class="t" style="left:1104.30px;top:716.84px;font-family:'Liberation Sans',sans-serif;font-size:12px;color:#ffffff;transform:scaleX(0.9426);transform-origin:0 0;">Col 38</div>
<div class="t" style="left:1196.40px;top:716.84px;font-family:'Liberation Sans',sans-serif;font-size:12px;color:#ffffff;transform:scaleX(0.8933);transform-origin:0 0;">Ch 41</div>
<div class="t" style="left:1332.30px;top:716.84px;font-family:'Liberation Sans',sans-serif;font-size:12px;color:#ffffff;transform:scaleX(0.8848);transform-origin:0 0;">INS</div>
<div style="left:0;top:728px;width:1366px;height:40px;background:linear-gradient(90deg,#22363d 0%,#21343f 35%,#1f2f44 70%,#1d2b47 100%)"></div>
<svg style="position:absolute;left:16px;top:739px;" width="17" height="17" viewBox="0 0 17 17"><path d="M0 2.3 L7 1.3 V7.8 H0 Z M8 1.2 L16.5 0 V7.8 H8 Z M0 8.8 H7 V15.3 L0 14.3 Z M8 8.8 H16.5 V16.5 L8 15.4 Z" fill="#fff"/></svg>
<svg style="position:absolute;left:63px;top:739px;" width="18" height="18" viewBox="0 0 18 18"><circle cx="11" cy="7" r="5.5" fill="none" stroke="#fff" stroke-width="1.4"/><path d="M7 11 L1 17" stroke="#fff" stroke-width="1.6"/></svg>
<svg style="position:absolute;left:111px;top:739px;" width="18" height="18" viewBox="0 0 18 18"><circle cx="9" cy="9" r="6.8" fill="none" stroke="#fff" stroke-width="2.2"/></svg>
<svg style="position:absolute;left:159px;top:739px;" width="18" height="18" viewBox="0 0 18 18"><rect x="1" y="4" width="11" height="9" fill="none" stroke="#fff" stroke-width="1.3"/><path d="M0 1 H13 M0 16 H13 M15 2 V4 M15 6 V15" stroke="#fff" stroke-width="1.3"/></svg>
<svg style="position:absolute;left:208px;top:738px;" width="22" height="19" viewBox="0 0 22 19"><rect x="0" y="1" width="9.5" height="3" rx="0.8" fill="#e9a300"/><rect x="0" y="2" width="21" height="16" fill="#ffd45e"/><rect x="0" y="2" width="21" height="1.2" fill="#f0b429"/><rect x="4" y="11" width="13.5" height="8" fill="#3d97e8"/><rect x="8" y="14" width="6" height="4" fill="#ffd45e"/></svg>
<svg style="position:absolute;left:256px;top:735px;" width="25" height="26" viewBox="0 0 25 26"><defs><linearGradient id="eg1" x1="0" y1="0.1" x2="1" y2="0.7"><stop offset="0" stop-color="#1d9be6"/><stop offset="0.5" stop-color="#31bcdc"/><stop offset="1" stop-color="#5fe05c"/></linearGradient><linearGradient id="eg2" x1="0" y1="0" x2="0.5" y2="1"><stop offset="0" stop-color="#1b88de"/><stop offset="1" stop-color="#0b58a6"/></linearGradient></defs><circle cx="12.5" cy="13" r="12" fill="url(#eg1)"/><path d="M8 13.5 C8 18 11.5 21.5 16.5 21.5 C19 21.5 21.5 20.5 23 19 C23.5 18 24 17 24.3 15.5 C22 17.8 19.5 18.3 17 18.3 C13 18.3 10 16.5 8 13.5 Z" fill="#1577d0"/><path d="M0.5 13 C0.5 8.5 4.5 5.5 9.5 5.5 C13.5 5.5 16 8 16 11 C15 9.5 13.5 9 12 9 C9.5 9 8 11 8 13.5 C8 18 11.5 21.5 16.5 21.5 C19 21.5 21.5 20.5 23 19 C21 23 17 25 12.5 25 C6 25 0.5 19.5 0.5 13 Z" fill="url(#eg2)"/><ellipse cx="12.3" cy="13.3" rx="3" ry="3" fill="#22363d"/></svg>
<div style="left:297px;top:766px;width:152px;height:2px;background:#76b9ed;"></div>
<svg style="position:absolute;left:303px;top:736px;" width="24" height="24" viewBox="0 0 24 24"><rect x="0" y="0" width="24" height="24" fill="#74279a"/><g transform="translate(2,3) scale(0.87,0.9)"><path d="M18.8 0 L21 1.6 L21 18.4 L18.8 20 L8.3 12 L2.2 15.8 L1 15 L1 5 L2.2 4.2 L8.3 8.3 Z M3.6 7.5 L5.8 10 L3.6 12.5 Z M16 7 L16 13 L11.8 10 Z" fill="#fff" fill-rule="evenodd"/></g></svg>
<div class="t" style="left:331.02px;top:747.84px;font-family:'Liberation Sans',sans-serif;font-size:12px;color:#ffffff;transform:scaleX(0.9224);transform-origin:0 0;">week6_basic_C (Ru...</div>
<div style="left:454px;top:728px;width:160px;height:40px;background:rgba(255,255,255,0.2);"></div>
<div style="left:454px;top:766px;width:160px;height:2px;background:#76b9ed;"></div>
<svg style="position:absolute;left:465px;top:737px;" width="22" height="21" viewBox="0 0 22 21"><rect x="0.5" y="0.5" width="21" height="20" fill="none" stroke="#8f969c" stroke-width="1"/><path d="M1 6 H9 M9 1 V20 M1 15 H9 M4.5 15 V20 M4.5 1 V6" stroke="#8f969c"/><rect x="9.5" y="1" width="11.5" height="11" fill="#f0b400"/><rect x="9.5" y="13" width="11.5" height="7" fill="#4a90f0"/><rect x="1.5" y="6.5" width="7.5" height="8" fill="#d0281c"/></svg>
<div class="t" style="left:492.00px;top:747.84px;font-family:'Liberation Sans',sans-serif;font-size:12px;color:#ffffff;transform:scaleX(0.9577);transform-origin:0 0;">Form1</div>
<div style="left:619px;top:766px;width:152px;height:2px;background:#76b9ed;"></div>
<svg style="position:absolute;left:626px;top:736px;" width="23" height="24" viewBox="0 0 23 24"><rect x="12" y="2.5" width="10" height="18.5" fill="#2b5aa5"/><rect x="13" y="3.5" width="8" height="16.5" fill="#fff"/><path d="M13.5 6.3 H19.5 M13.5 8.3 H19.5 M13.5 10.3 H19.5 M13.5 12.8 H19.5 M13.5 15.3 H19.5 M13.5 17.3 H19.5" stroke="#2b5aa5" stroke-width="0.8"/><path d="M0 2.5 L13 0 V23 L0 20.5 Z" fill="#2b5aa5"/><path d="M2.3 8 L4 14.5 L6.3 9.5 L8.6 14.5 L10.3 8" fill="none" stroke="#fff" stroke-width="1.3"/></svg>
<div class="t" style="left:653.00px;top:747.84px;font-family:'Liberation Sans',sans-serif;font-size:12px;color:#ffffff;transform:scaleX(1.0131);transform-origin:0 0;">Document1 - Word</div>
<svg style="position:absolute;left:1146px;top:744px;" width="14" height="8" viewBox="0 0 14 8"><path d="M0.5 7.5 L6.75 1 L13 7.5" fill="none" stroke="#fff" stroke-width="1.3"/></svg>
<svg style="position:absolute;left:1168px;top:741px;" width="18" height="15" viewBox="0 0 18 15"><rect x="3.5" y="0.5" width="14" height="9" fill="none" stroke="#fff" stroke-width="1.1"/><path d="M10.5 10 V13 M7 14.5 H14" stroke="#fff" stroke-width="1.1"/><rect x="0.5" y="2.5" width="5" height="4" fill="#22303f" stroke="#fff" stroke-width="1"/><path d="M3 7 V14.5" stroke="#fff"/></svg>
<svg style="position:absolute;left:1192px;top:742px;" width="16" height="14" viewBox="0 0 16 14"><path d="M0.5 4.5 H3 L7 0.8 V13.2 L3 9.5 H0.5 Z" fill="none" stroke="#fff" stroke-width="1.1"/><path d="M10 5 L14.5 9.5 M14.5 5 L10 9.5" stroke="#fff" stroke-width="1.2"/></svg>
<div class="t" style="left:1219.20px;top:747.84px;font-family:'Liberation Sans',sans-serif;font-size:12px;color:#ffffff;transform:scaleX(0.8691);transform-origin:0 0;">ENG</div>
<div class="t" style="left:1267.50px;top:738.84px;font-family:'Liberation Sans',sans-serif;font-size:12px;color:#ffffff;transform:scaleX(0.8893);transform-origin:0 0;">10:40</div>
<div class="t" style="left:1255.80px;top:756.84px;font-family:'Liberation Sans',sans-serif;font-size:12px;color:#ffffff;transform:scaleX(0.9714);transform-origin:0 0;">11/1/2564</div>
<svg style="position:absolute;left:1324px;top:739px;" width="26" height="25" viewBox="0 0 26 25"><path d="M1 1 H17 V12 H9 L5 16 V12 H1 Z" fill="#fff"/><path d="M4 4.5 H14 M4 7.5 H14" stroke="#22303f" stroke-width="1.2"/><circle cx="16.5" cy="16" r="7" fill="#2b2f36" stroke="#8d939a" stroke-width="1"/></svg>
<div class="t" style="left:1337.00px;top:756.19px;font-family:'Liberation Sans',sans-serif;font-size:11px;color:#ffffff;transform:scaleX(1.2263);transform-origin:0 0;">2</div>
<div style="left:1361px;top:728px;width:1px;height:40px;background:#5a6470;"></div>
<div style="left:854px;top:245px;width:332px;height:312px;background:#f0f0f0;border:1px solid #6f6f6f;box-shadow:0 6px 22px rgba(0,0,0,0.30),0 0 8px rgba(0,0,0,0.12)"></div>
<div style="left:855px;top:246px;width:330px;height:30px;background:#ffffff;"></div>
<div style="left:855px;top:555px;width:330px;height:1px;background:#fbfbfb;"></div>
<div style="left:1184px;top:276px;width:1px;height:280px;background:#fbfbfb;"></div>
<svg style="position:absolute;left:864px;top:253px;" width="15" height="15" viewBox="0 0 15 15"><g transform="scale(0.93)"><rect x="0.5" y="0.5" width="14" height="14" fill="#fff" stroke="#c8c8c8"/><path d="M1 5 H5 M5 1 V14 M1 10 H5 M5 9 H14" stroke="#c8c8c8"/><rect x="6" y="1" width="8" height="7" fill="#f2c12e" stroke="#b08a10" stroke-width="0.6"/><rect x="1" y="5.5" width="4" height="4" fill="#c62828"/><rect x="6" y="9.5" width="7" height="4" fill="#5b9bea"/></g></svg>
<div class="t" style="left:884.50px;top:260.84px;font-family:'Liberation Sans',sans-serif;font-size:12px;color:#000000;transform:scaleX(0.9230);transform-origin:0 0;">Form1</div>
<div style="left:1066px;top:260px;width:11px;height:1px;background:#000;"></div>
<div style="left:1111px;top:255px;width:10px;height:10px;background:transparent;border:1px solid #000"></div>
<svg style="position:absolute;left:1157px;top:255px;" width="11" height="11" viewBox="0 0 11 11"><path d="M0.5 0.5 L10.5 10.5 M10.5 0.5 L0.5 10.5" stroke="#000" stroke-width="1"/></svg>
<div style="left:969px;top:321px;width:100px;height:20px;background:#ffffff;border:1px solid #7a7a7a"></div>
<div class="t" style="left:972.00px;top:330.67px;font-family:'Liberation Sans',sans-serif;font-size:12.5px;color:#000000;transform:scaleX(0.8633);transform-origin:0 0;">24</div>
<div style="left:969px;top:361px;width:100px;height:20px;background:#ffffff;border:1px solid #7a7a7a"></div>
<div class="t" style="left:972.00px;top:370.67px;font-family:'Liberation Sans',sans-serif;font-size:12.5px;color:#000000;transform:scaleX(0.8633);transform-origin:0 0;">26</div>
<div style="left:969px;top:408px;width:100px;height:20px;background:#ffffff;border:1px solid #7a7a7a"></div>
<div class="t" style="left:972.00px;top:417.67px;font-family:'Liberation Sans',sans-serif;font-size:12.5px;color:#000000;transform:scaleX(0.8633);transform-origin:0 0;">50</div>
<div style="left:1090px;top:408px;width:83px;height:20px;background:#ffffff;border:1px solid #7a7a7a"></div>
<svg style="position:absolute;left:1092.50px;top:410.00px;overflow:visible" width="24.3" height="14.0"><g transform="translate(1,6.00) scale(1.080,0.857)" fill="none" stroke="#000" stroke-width="1.05"><path transform="translate(0.00,0)" d="M0.7 1.5 V7 L2.6 4 L4.5 7 V0 M0.7 1.5 m-0.1 0 a0.8 0.8 0 1 0 0.1 -0.1"/><path transform="translate(5.80,0)" d="M0 -4.6 V-2"/><path transform="translate(6.40,0)" d="M0.5 1.2 Q2 -0.4 3.4 1 V7"/><path transform="translate(11.60,0)" d="M0.7 1.5 V7 L3.6 3.5 M4.3 0 V6 Q4.3 7 5.2 7 Q6 7 6 6 Q6 5 5 5.2 M0.7 1.5 m-0.1 0 a0.8 0.8 0 1 0 0.1 -0.1"/></g></svg>
<div style="left:970px;top:454px;width:73px;height:21px;background:#e1e1e1;border:2px solid #0078d7"></div>
<svg style="position:absolute;left:988.50px;top:457.00px;overflow:visible" width="38.3" height="14.0"><g transform="translate(1,6.00) scale(1.093,0.857)" fill="none" stroke="#000" stroke-width="1.05"><path transform="translate(0.00,0)" d="M0.9 5.5 V3 Q0.9 0.4 2.8 0.4 Q4.6 0.4 4.6 3 V7 M0.9 5.5 m-0.1 0 a0.8 0.8 0 1 0 0.1 0.1"/><path transform="translate(6.40,0)" d="M-0.2 -2.4 a0.9 0.9 0 1 0 0.1 0.1 M0.5 1.2 Q2 -0.4 3.4 1 V7"/><path transform="translate(11.60,0)" d="M0.7 1.5 V7 L3.6 3.5 M4.3 0 V6 Q4.3 7 5.2 7 Q6 7 6 6 Q6 5 5 5.2 M0.7 1.5 m-0.1 0 a0.8 0.8 0 1 0 0.1 -0.1"/><path transform="translate(18.80,0)" d="M0.5 1.2 Q2 -0.4 3.6 1.2 V5.6 Q3.6 7 2.1 7 Q0.9 7 1 6 Q1.1 5.2 1.9 5.5"/><path transform="translate(24.20,0)" d="M0.7 1.5 V7 L3.6 3.5 M4.3 0 V6 Q4.3 7 5.2 7 Q6 7 6 6 Q6 5 5 5.2 M0.7 1.5 m-0.1 0 a0.8 0.8 0 1 0 0.1 -0.1"/></g></svg>
</body></html>
